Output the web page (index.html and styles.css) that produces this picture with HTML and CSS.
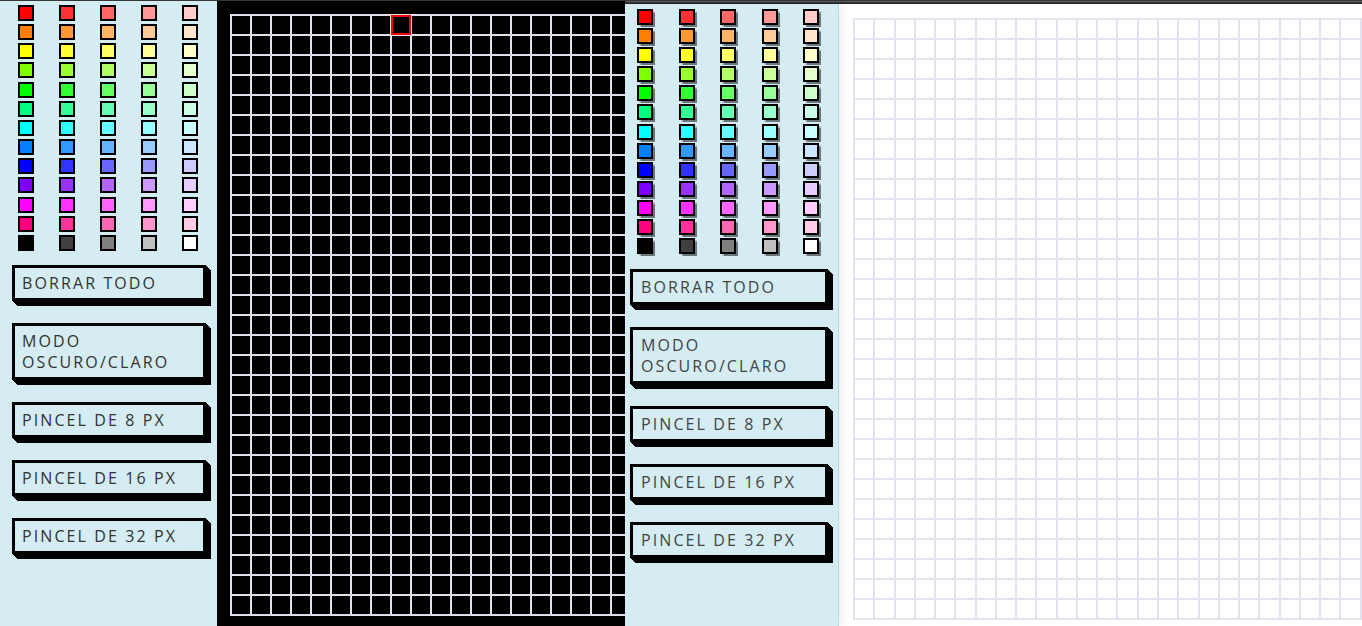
FILE: index.html
```html
<!DOCTYPE html>
<html lang="es">
<head>
<meta charset="utf-8">
<title>Pixel art</title>
<link rel="stylesheet" href="styles.css">
</head>
<body>
  <div class="app app--dark">
    <aside class="panel">
      <div class="palette"></div>
      <div class="actions">
        <button class="btn">BORRAR TODO</button>
        <button class="btn">MODO OSCURO/CLARO</button>
        <button class="btn">PINCEL DE 8 PX</button>
        <button class="btn">PINCEL DE 16 PX</button>
        <button class="btn">PINCEL DE 32 PX</button>
      </div>
    </aside>
    <main class="board">
      <div class="grid" data-cols="20" data-rows="30" data-active="8"></div>
    </main>
  </div>
  <div class="app app--light">
    <aside class="panel">
      <div class="palette"></div>
      <div class="actions">
        <button class="btn">BORRAR TODO</button>
        <button class="btn">MODO OSCURO/CLARO</button>
        <button class="btn">PINCEL DE 8 PX</button>
        <button class="btn">PINCEL DE 16 PX</button>
        <button class="btn">PINCEL DE 32 PX</button>
      </div>
    </aside>
    <main class="board">
      <div class="grid" data-cols="26" data-rows="30"></div>
    </main>
  </div>
  <script src="script.js"></script>
</body>
</html>
```
FILE: styles.css
```css
html, body {
  margin: 0;
  padding: 0;
}
body {
  width: 1362px;
  height: 626px;
  overflow: hidden;
  display: flex;
  align-items: flex-start;
  background: linear-gradient(#262626, #5a5a5a 40%, #3a3a3a 60%, #1c1c1c) top / 100% 4px no-repeat, #1c1c1c;
  font-family: "Open Sans", "DejaVu Sans", sans-serif;
}

.app {
  display: flex;
  flex: none;
}
.app--dark {
  width: 625px;
  height: 625px;
  margin-top: 1px;
}
.app--light {
  flex: 1;
  min-width: 0;
  height: 622px;
  margin-top: 4px;
}

.panel {
  flex: none;
  background: #d4ecf2;
  box-sizing: border-box;
}
.app--dark .panel {
  width: 217px;
  padding-top: 4px;
  --col: 41px;
  --gap: 3.17px;
  --pad: 18px;
  --bw: 194px;
  --bml: 12px;
  --bpl: 7px;
  --first: 14px;
}
.app--light .panel {
  width: 214px;
  padding-top: 5px;
  border-right: 1px solid #a9dfe9;
  position: relative;
  z-index: 1;
  box-shadow: 3px 0 9px rgba(0, 0, 0, 0.07);
  --col: 41.6px;
  --gap: 3.1px;
  --pad: 12px;
  --bw: 198px;
  --bml: 5px;
  --bpl: 8px;
  --first: 15px;
}

.palette {
  display: grid;
  grid-template-columns: repeat(5, var(--col));
  grid-auto-rows: 16px;
  row-gap: var(--gap);
  padding-left: var(--pad);
}
.swatch {
  width: 16px;
  height: 16px;
  box-sizing: border-box;
  border: 2px solid #000;
  padding: 0;
  margin: 0;
  cursor: pointer;
}
.app--light .swatch {
  box-shadow: 1.5px 1.5px 1px rgba(0, 0, 0, 0.5);
}

.actions {
  display: flex;
  flex-direction: column;
  align-items: flex-start;
  gap: 22px;
  margin-top: var(--first);
  padding-left: var(--bml);
}
.btn {
  width: var(--bw);
  box-sizing: border-box;
  border: 3px solid #000;
  background: transparent;
  text-align: left;
  font-family: "Open Sans", "DejaVu Sans", sans-serif;
  font-size: 16px;
  line-height: 21px;
  letter-spacing: 2.1px;
  color: #333;
  padding: 5px var(--bpl) 4px;
  margin: 0;
  cursor: pointer;
  box-shadow: 1px 1px 0 #000, 2px 2px 0 #000, 3px 3px 0 #000, 4px 4px 0 #000, 5px 5px 0 #000;
}
.app--light .btn {
  color: #444;
}

.board {
  flex: 1;
  min-width: 0;
  overflow: hidden;
  box-sizing: border-box;
}
.app--dark .board {
  background: #000;
  padding: 13px 0 0 13px;
  --cw: 20px;
  --line: #e0dfee;
}
.app--light .board {
  background: #fff;
  padding: 14px 0 0 14px;
  --cw: 20.27px;
  --line: #e3e2f0;
}

.grid {
  display: grid;
  width: max-content;
  grid-template-columns: repeat(var(--cols, 20), var(--cw));
  grid-auto-rows: 20px;
  border: 1px solid var(--line);
}
.cell {
  box-sizing: border-box;
  border: 1px solid var(--line);
}
.cell.active {
  border: 2px solid #ff0000;
}
```
FILE: script.js
```js
const colors = [
  ['#ff0000', '#ff3333', '#ff6666', '#ff9999', '#ffcccc'],
  ['#ff8000', '#ff9933', '#ffb366', '#ffcc99', '#ffe6cc'],
  ['#ffff00', '#ffff33', '#ffff66', '#ffff99', '#ffffcc'],
  ['#80ff00', '#99ff33', '#b3ff66', '#ccff99', '#e6ffcc'],
  ['#00ff00', '#33ff33', '#66ff66', '#99ff99', '#ccffcc'],
  ['#00ff80', '#33ff99', '#66ffb3', '#99ffcc', '#ccffe6'],
  ['#00ffff', '#33ffff', '#66ffff', '#99ffff', '#ccffff'],
  ['#0080ff', '#3399ff', '#66b3ff', '#99ccff', '#cce6ff'],
  ['#0000ff', '#3333ff', '#6666ff', '#9999ff', '#ccccff'],
  ['#8000ff', '#9933ff', '#b366ff', '#cc99ff', '#e6ccff'],
  ['#ff00ff', '#ff33ff', '#ff66ff', '#ff99ff', '#ffccff'],
  ['#ff0080', '#ff3399', '#ff66b3', '#ff99cc', '#ffcce6'],
  ['#000000', '#404040', '#808080', '#c0c0c0', '#ffffff']
];

document.querySelectorAll('.palette').forEach(function (palette) {
  colors.forEach(function (row) {
    row.forEach(function (c) {
      var b = document.createElement('button');
      b.className = 'swatch';
      b.title = c;
      b.style.background = c;
      palette.appendChild(b);
    });
  });
});

document.querySelectorAll('.grid').forEach(function (grid) {
  var cols = +grid.dataset.cols;
  var rows = +grid.dataset.rows;
  var active = grid.dataset.active !== undefined ? +grid.dataset.active : -1;
  grid.style.setProperty('--cols', cols);
  var frag = document.createDocumentFragment();
  for (var i = 0; i < cols * rows; i++) {
    var d = document.createElement('div');
    d.className = i === active ? 'cell active' : 'cell';
    frag.appendChild(d);
  }
  grid.appendChild(frag);
});
```
